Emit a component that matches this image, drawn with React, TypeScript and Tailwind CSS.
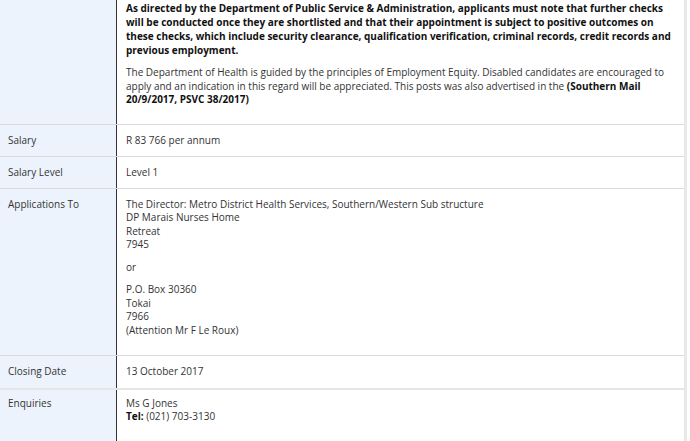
export default function App() {
  return (
    <div className="w-[690px] h-[441px] overflow-hidden bg-white text-[#333] text-[10px] leading-[13.5px]" style={{ fontFamily: '"Open Sans", sans-serif' }}>
      <div className="w-[687px] border-r-[3px] border-[#e8e8e8]">
        <Row label="" pt="pt-px" pb="pb-[17px]">
          <p className="font-bold text-[#111] leading-[14px] whitespace-nowrap">
            As directed by the Department of Public Service &amp; Administration, applicants must note that further checks<br />
            will be conducted once they are shortlisted and that their appointment is subject to positive outcomes on<br />
            these checks, which include security clearance, qualification verification, criminal records, credit records and<br />
            previous employment.
          </p>
          <p className="mt-[9px] whitespace-nowrap">
            The Department of Health is guided by the principles of Employment Equity. Disabled candidates are encouraged to<br />
            apply and an indication in this regard will be appreciated. This posts was also advertised in the{' '}
            <b className="text-[#111]">(Southern Mail<br />20/9/2017, PSVC 38/2017)</b>
          </p>
        </Row>
        <Row label="Salary">R 83 766 per annum</Row>
        <Row label="Salary Level" pb="pb-[8px]">Level 1</Row>
        <Row label="Applications To" pb="pb-[18px]">
          <p>
            The Director: Metro District Health Services, Southern/Western Sub structure<br />
            DP Marais Nurses Home<br />
            Retreat<br />
            7945
          </p>
          <p className="mt-[9px]">or</p>
          <p className="mt-[9px]">
            P.O. Box 30360<br />
            Tokai<br />
            7966<br />
            (Attention Mr F Le Roux)
          </p>
        </Row>
        <Row label="Closing Date" border="border-b-2 border-[#e6e6e6]">13 October 2017</Row>
        <Row label="Enquiries" pt="pt-[7px]" pb="pb-[40px]" border="">
          Ms G Jones<br />
          <b className="text-[#111]">Tel:</b> (021) 703-3130
        </Row>
      </div>
    </div>
  )
}

function Row({ label, children, pt = 'pt-[9px]', pb = 'pb-[9px]', border = 'border-b border-[#d9d9d9]' }: {
  label: string; children: React.ReactNode; pt?: string; pb?: string; border?: string
}) {
  return (
    <div className={`flex ${border}`}>
      <div className={`w-[117px] shrink-0 bg-[#edf3fc] px-2 border-r border-[#333] ${pt} ${pb}`}>
        {label}
      </div>
      <div className={`flex-1 pl-[9px] pr-2 ${pt} ${pb}`}>
        {children}
      </div>
    </div>
  )
}
